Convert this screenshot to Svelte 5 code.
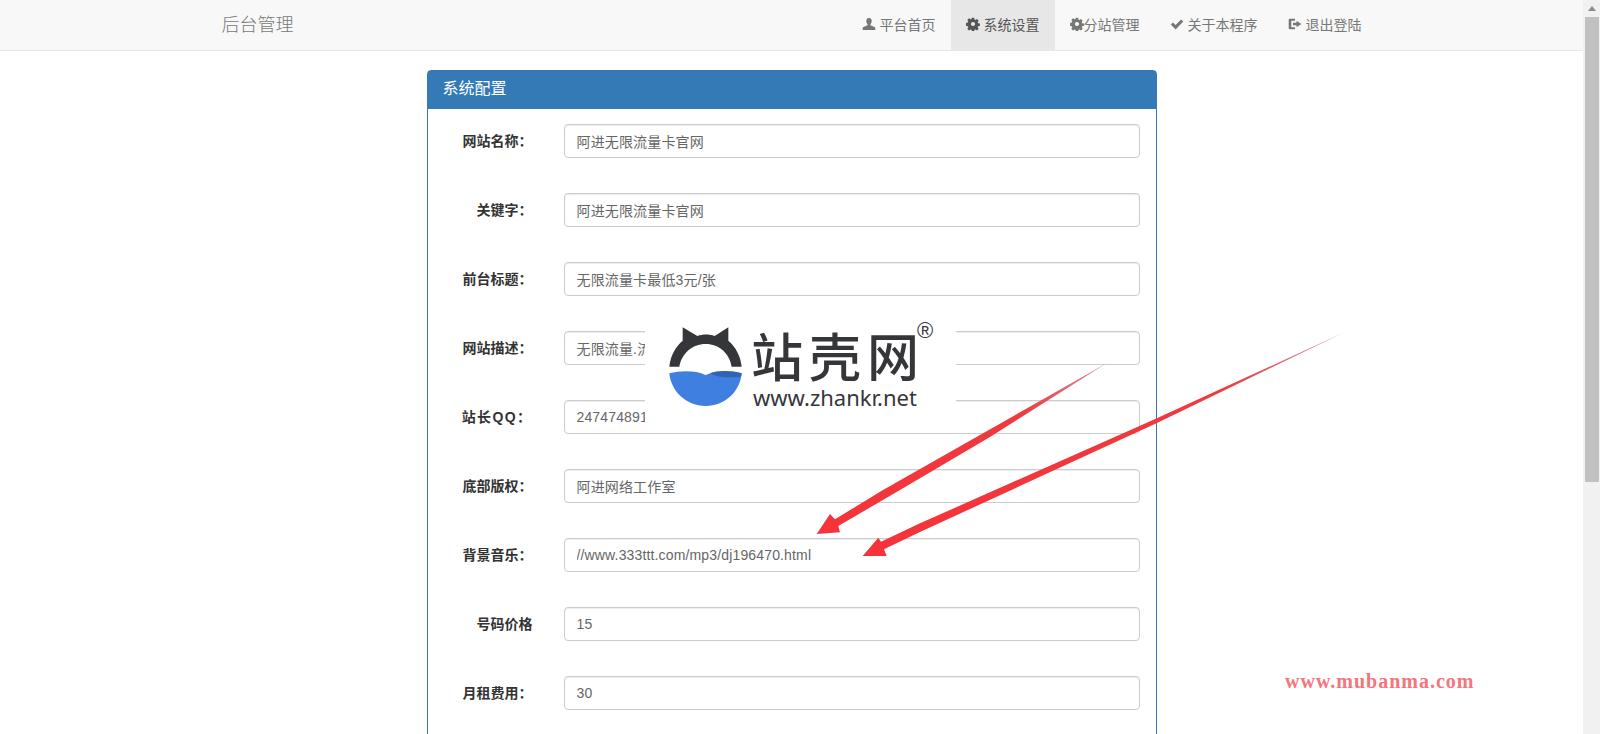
<script>
  const nav = [
    { icon: 'user', text: '平台首页', gap: 4 },
    { icon: 'cog', text: '系统设置', gap: 4, active: true },
    { icon: 'cog', text: '分站管理', gap: 0 },
    { icon: 'ok', text: '关于本程序', gap: 4 },
    { icon: 'out', text: '退出登陆', gap: 4 }
  ];

  const rows = [
    { label: '网站名称：', value: '阿进无限流量卡官网' },
    { label: '关键字：', value: '阿进无限流量卡官网' },
    { label: '前台标题：', value: '无限流量卡最低3元/张' },
    { label: '网站描述：', value: '无限流量.流量卡,无限流量卡' },
    { label: '站长QQ：', value: '2474748917', spaced: true },
    { label: '底部版权：', value: '阿进网络工作室' },
    { label: '背景音乐：', value: '//www.333ttt.com/mp3/dj196470.html' },
    { label: '号码价格', value: '15' },
    { label: '月租费用：', value: '30' }
  ];
</script>

{#snippet glyph(name)}
  <svg class="glyph" viewBox="0 0 14 14" aria-hidden="true">
    {#if name === 'user'}
      <path d="M7 1C5.2 1 4.3 2.3 4.3 4c0 1.300.5 2.500 1.200 3.200v1L1.500 10c-.6.300-.8.800-.8 1.400V13h12.600v-1.600c0-.6-.2-1.100-.8-1.400L8.500 8.200v-1C9.200 6.500 9.700 5.300 9.700 4 9.700 2.300 8.800 1 7 1z" />
    {:else if name === 'cog'}
      <path
        fill-rule="evenodd"
        d="M5.800.8h2.400l.3 1.800 1 .4 1.500-1 1.700 1.700-1 1.500.4 1 1.800.3v2.400l-1.800.3-.4 1 1 1.500-1.700 1.700-1.500-1-1 .4-.3 1.800H5.800l-.3-1.800-1-.4-1.500 1-1.700-1.700 1-1.500-.4-1-1.800-.3V5.800l1.800-.3.4-1-1-1.500L3 1.300l1.500 1 1-.4zM7 4.900a2.100 2.100 0 1 0 0 4.200 2.100 2.100 0 0 0 0-4.200z"
      />
    {:else if name === 'ok'}
      <path d="M.8 7.600l2.200-2.200 2.600 2.600 5.500-5.600 2.200 2.200L5.600 12.400z" />
    {:else}
      <path d="M1.800 1.800h5.200v2H3.300v6.400H7v2H1.800C1 12.200.7 11.700.7 11V3C.7 2.300 1 1.800 1.800 1.800zM8.600 3.800L13.300 7l-4.700 3.200V8.200H5V5.800h3.600z" />
    {/if}
  </svg>
{/snippet}

<div class="screen">
  <div class="page">
    <nav class="navbar">
      <div class="container">
        <span class="brand">后台管理</span>
        <ul class="links">
          {#each nav as item}
            <li class:active={item.active}>
              {@render glyph(item.icon)}<span style="margin-left: {item.gap}px">{item.text}</span>
            </li>
          {/each}
        </ul>
      </div>
    </nav>

    <section class="panel">
      <h3 class="panel-heading">系统配置</h3>
      <form class="panel-body">
        {#each rows as row}
          <div class="form-row">
            <label for={row.label} class:spaced={row.spaced}>{row.label}</label>
            <input id={row.label} type="text" value={row.value} />
          </div>
        {/each}
      </form>
    </section>
  </div>

  <div class="scrollbar">
    <span class="arrow-up"></span>
    <span class="thumb"></span>
  </div>

  <!-- watermark pasted over the form -->
  <div class="stamp">
    <svg class="stamp-logo" viewBox="0 0 300 285" aria-hidden="true">
      <path
        fill="#35363a"
        d="M28 140C32 105 47 80 68 62L68 22 112 48C128 42 148 42 164 48L205 22 205 62C226 80 241 105 245 140H215C208 100 178 72 137 72 96 72 66 100 58 140Z"
      />
      <path fill="#3f7fe0" d="M28 160C60 152 105 150 137 165 170 150 215 152 245 160 240 215 195 258 137 258 80 258 33 215 28 160Z" />
      <path fill="#2f63b8" d="M150 160C175 150 215 152 245 160L243 170C215 173 175 175 150 160Z" />
    </svg>
    <div class="stamp-name">站壳网</div>
    <div class="stamp-url">www.zhankr.net</div>
    <div class="stamp-reg">®</div>
  </div>

  <svg class="arrows" viewBox="0 0 1600 734" aria-hidden="true">
    <defs>
      <linearGradient id="tail-a" x1="1107" y1="363" x2="816" y2="534" gradientUnits="userSpaceOnUse">
        <stop offset="0" stop-color="#c9909a" />
        <stop offset="0.3" stop-color="#ee3a40" />
        <stop offset="1" stop-color="#f5333a" />
      </linearGradient>
      <linearGradient id="tail-b" x1="1345" y1="332" x2="862" y2="556" gradientUnits="userSpaceOnUse">
        <stop offset="0" stop-color="#c9909a" />
        <stop offset="0.25" stop-color="#ee3a40" />
        <stop offset="1" stop-color="#f5333a" />
      </linearGradient>
    </defs>
    <polygon
      fill="url(#tail-a)"
      points="1107,363 990,437 900,490 838.300,526 840,532.300 816.700,534 830,514 835,519.300 883,490 987,431"
    />
    <polygon
      fill="url(#tail-b)"
      points="1345,332 1157,423 920,532 884,549.300 886.700,556 862.700,556 878.300,537.700 881,541.700 920,523.300 1153,420"
    />
  </svg>

  <div class="mark">www.mubanma.com</div>
</div>

<style>
  :global(body) {
    margin: 0;
    background: #fff;
  }

  .screen {
    position: relative;
    display: flex;
    width: 1600px;
    height: 734px;
    overflow: hidden;
    font-family: "Liberation Sans", "Noto Sans CJK SC", sans-serif;
    font-size: 14px;
    color: #333;
  }

  .page {
    flex: 1;
    min-width: 0;
  }

  .navbar {
    height: 51px;
    box-sizing: border-box;
    background: #f8f8f8;
    border-bottom: 1px solid #e7e7e7;
  }

  .container {
    display: flex;
    justify-content: space-between;
    width: 1170px;
    height: 50px;
    margin: 0 auto;
  }

  .brand {
    padding-left: 15px;
    font-size: 18px;
    font-weight: 300;
    line-height: 50px;
    color: #777;
  }

  .links {
    display: flex;
    margin: 0;
    padding: 0;
    list-style: none;
  }

  .links li {
    display: flex;
    align-items: center;
    height: 50px;
    padding: 0 15px 2px;
    box-sizing: border-box;
    color: #777;
  }

  .links li.active {
    background: #e7e7e7;
    color: #555;
  }

  .glyph {
    width: 14px;
    height: 14px;
    fill: currentColor;
    flex: none;
  }

  .panel {
    width: 730px;
    box-sizing: border-box;
    margin: 19px auto 0;
    border: 1px solid #337ab7;
    border-radius: 4px;
  }

  .panel-heading {
    margin: 0;
    height: 38px;
    padding: 0 15px;
    background: #337ab7;
    color: #fff;
    font-size: 16px;
    font-weight: 400;
    line-height: 36px;
  }

  .panel-body {
    padding: 15px 16px 0 15px;
  }

  .form-row {
    display: grid;
    grid-template-columns: 90px 1fr;
    column-gap: 31px;
    align-items: center;
    margin-bottom: 35px;
  }

  label {
    padding-bottom: 2px;
    text-align: right;
    font-weight: 700;
    color: #333;
  }

  label.spaced {
    letter-spacing: 1.400px;
  }

  input {
    width: 100%;
    height: 34px;
    box-sizing: border-box;
    padding: 6px 12px;
    border: 1px solid #ccc;
    border-radius: 4px;
    font: inherit;
    letter-spacing: 0.150px;
    color: #666;
    box-shadow: inset 0 1px 1px rgba(0, 0, 0, 0.075);
  }

  .scrollbar {
    display: flex;
    flex-direction: column;
    align-items: center;
    flex: none;
    width: 17px;
    background: #f1f1f1;
  }

  .arrow-up {
    width: 0;
    height: 0;
    margin: 6px 0 6px;
    border: 4px solid transparent;
    border-top: 0;
    border-bottom: 5px solid #8a8a8a;
  }

  .thumb {
    width: 14px;
    height: 465px;
    background: #c1c1c1;
  }

  .stamp {
    position: absolute;
    left: 645px;
    top: 316px;
    width: 311px;
    height: 114px;
    background: #fff;
    color: #35363a;
  }

  .stamp-logo {
    position: absolute;
    left: 15px;
    top: 4px;
    width: 100px;
    height: 95px;
  }

  .stamp-name {
    position: absolute;
    left: 106px;
    top: 21px;
    font-size: 52px;
    font-weight: 500;
    letter-spacing: 6px;
    line-height: 44px;
    white-space: nowrap;
  }

  .stamp-url {
    position: absolute;
    left: 108px;
    top: 66px;
    font-family: "Noto Sans", sans-serif;
    font-size: 22px;
    line-height: 30px;
    white-space: nowrap;
  }

  .stamp-reg {
    position: absolute;
    left: 272px;
    top: 8px;
    font-size: 22px;
    line-height: 14px;
  }

  .arrows {
    position: absolute;
    inset: 0;
    width: 1600px;
    height: 734px;
    pointer-events: none;
  }

  .mark {
    position: absolute;
    left: 1285px;
    top: 669px;
    font-family: "Liberation Serif", serif;
    font-size: 20px;
    font-weight: 700;
    letter-spacing: 1px;
    line-height: 24px;
    color: #f4757c;
  }
</style>
